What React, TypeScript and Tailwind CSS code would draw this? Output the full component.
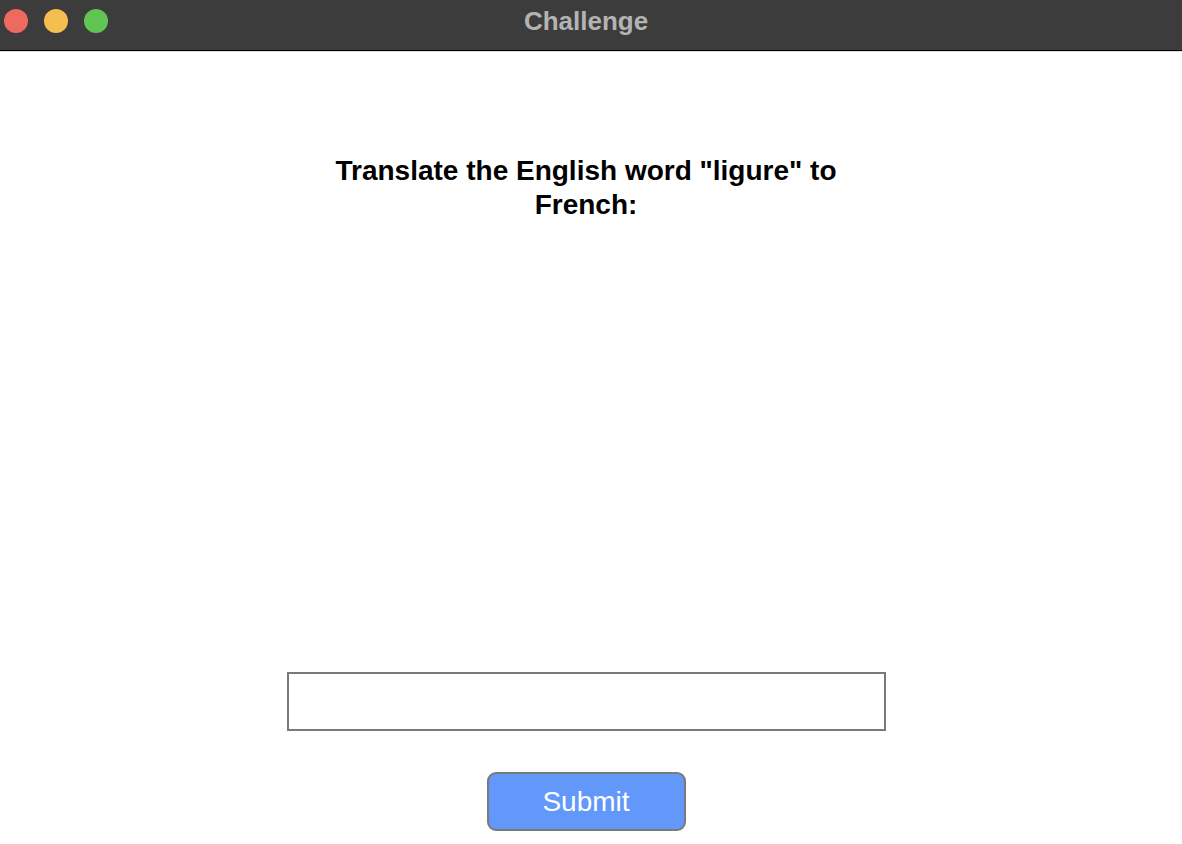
import React from "react";

export default function App() {
  return (
    <div className="w-[1182px] h-[844px] bg-white flex flex-col overflow-hidden" style={{ fontFamily: '"Liberation Sans", Arial, sans-serif' }}>
      <div className="relative h-[51px] bg-[#3c3c3c] border-b border-black flex items-center shrink-0">
        <div className="flex items-center gap-4 pl-1 -mt-[8px]">
          <span className="w-6 h-6 rounded-full bg-[#ee6a5f]" />
          <span className="w-6 h-6 rounded-full bg-[#f5bf4f]" />
          <span className="w-6 h-6 rounded-full bg-[#61c554]" />
        </div>
        <div className="absolute inset-y-0 left-0 w-[1172px] h-[43px] flex items-center justify-center pointer-events-none">
          <span className="text-[26px] font-bold text-[#b3b3b3]">Challenge</span>
        </div>
      </div>
      <div className="h-px bg-[#dcdcdc] shrink-0" />
      <div className="flex flex-col items-center flex-1 w-[1172px]">
        <h1 className="mt-[102px] w-[540px] text-center text-[28px] leading-[34px] font-bold text-black">
          Translate the English word "ligure" to French:
        </h1>
        <input
          type="text"
          className="mt-[450px] w-[599px] h-[59px] border-2 border-[#7a7a7a] bg-white outline-none"
        />
        <button className="mt-[41px] w-[199px] h-[59px] rounded-[9px] border-2 border-[#7a7a7a] bg-[#6298f9] text-white text-[28px] leading-none">
          Submit
        </button>
      </div>
    </div>
  );
}
